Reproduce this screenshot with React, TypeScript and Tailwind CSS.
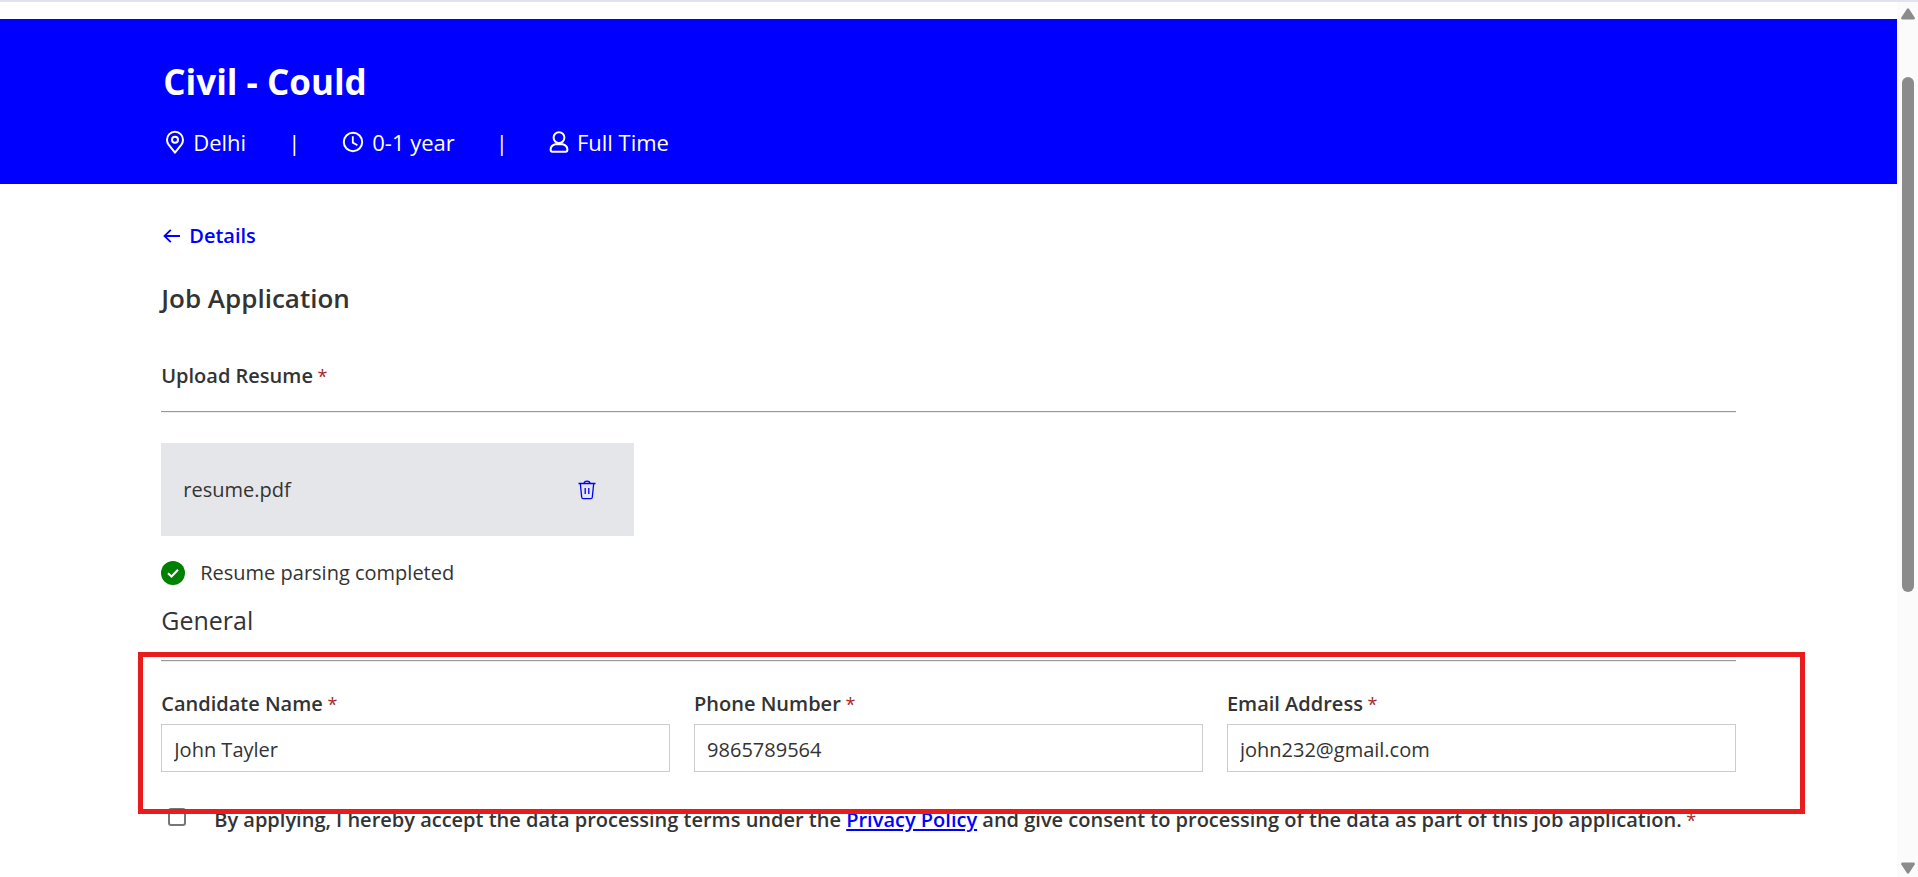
import React from "react";

function PinIcon() {
  return (
    <svg width="20" height="24" viewBox="0 0 20 24" fill="none" stroke="currentColor" strokeWidth="2" aria-hidden="true">
      <path d="M10 22.6 3.6 14.6A8 8 0 0 1 2 9.8 8 8 0 0 1 18 9.8a8 8 0 0 1-1.6 4.8Z" strokeLinejoin="round" />
      <circle cx="10" cy="9.8" r="3" />
    </svg>
  );
}

function ClockIcon() {
  return (
    <svg width="22" height="22" viewBox="0 0 22 22" fill="none" stroke="currentColor" strokeWidth="2" aria-hidden="true">
      <circle cx="11" cy="11" r="9.2" />
      <path d="M10.8 5.2v6.4l4.6 2.6" strokeWidth="1.8" />
    </svg>
  );
}

function PersonIcon() {
  return (
    <svg width="20" height="22" viewBox="0 0 20 22" fill="none" stroke="currentColor" strokeWidth="2" aria-hidden="true">
      <circle cx="10" cy="6.6" r="5.4" />
      <path d="M6.200 13.200h7.600c2.800.8 4.600 2.600 4.600 5.400 0 1.400-.6 2.200-1.800 2.200H3.400c-1.200 0-1.800-.8-1.800-2.200 0-2.800 1.800-4.600 4.600-5.400Z" />
    </svg>
  );
}

function BackIcon() {
  return (
    <svg width="18" height="14" viewBox="0 0 18 14" fill="none" stroke="currentColor" strokeWidth="1.800" aria-hidden="true">
      <path d="M17 7H2M7.800.8 1.500 7l6.300 6.200" />
    </svg>
  );
}

function TrashIcon() {
  return (
    <svg width="18" height="20" viewBox="0 0 18 20" fill="none" stroke="currentColor" strokeWidth="1.300" aria-hidden="true">
      <path d="M.5 3.500h17M6 3.500C6 1.800 7.200 1.200 9 1.200s3 .6 3 2.300M2.300 3.500l1.400 13.700c.1 1 .7 1.500 1.700 1.500h7.200c1 0 1.600-.5 1.700-1.500l1.400-13.700M7.200 8v6M10.800 8v6" />
    </svg>
  );
}

function DoneIcon() {
  return (
    <svg width="24" height="24" viewBox="0 0 24 24" aria-hidden="true">
      <circle cx="12" cy="12" r="12" fill="#008000" />
      <path d="m7 12.200 3.500 3.300L17 8.700" fill="none" stroke="#fff" strokeWidth="2" />
    </svg>
  );
}

function Required() {
  return <span className="text-[18px] font-normal text-[#a4262c]"> *</span>;
}

function Rule() {
  return <hr className="h-[2px] border-0 border-t border-[#999] bg-[#eee]" />;
}

type FieldProps = { id: string; label: string; type: string; value: string };

function Field({ id, label, type, value }: FieldProps) {
  return (
    <div className="flex min-w-0 flex-col">
      <label htmlFor={id} className="pb-[6px] font-semibold">
        {label}
        <Required />
      </label>
      <input
        id={id}
        type={type}
        defaultValue={value}
        className="h-12 w-full border border-[#ccc] bg-white px-3 pt-[2px] outline-none focus:border-[#0000ff]"
      />
    </div>
  );
}

function ScrollRail() {
  return (
    <div className="flex w-[21px] shrink-0 flex-col items-center bg-[#fbfbfb] pt-[6px] pb-[3px]" aria-hidden="true">
      <svg width="14" height="12" viewBox="0 0 14 12" fill="#8b8b8b">
        <path d="M5.700 1.200Q7-.6 8.300 1.200L13.700 9.500Q14.200 11.500 12.500 11.500H1.500Q-.2 11.500.3 9.500Z" />
      </svg>
      <div className="flex w-3 flex-1 flex-col pt-[57px] pb-4">
        <div className="basis-[515px] rounded-full bg-[#8b8b8b]" />
      </div>
      <svg width="14" height="12" viewBox="0 0 14 12" fill="#8b8b8b">
        <path d="M5.700 10.800Q7 12.600 8.300 10.800L13.700 2.500Q14.200.5 12.500.5H1.500Q-.2.5.3 2.500Z" />
      </svg>
    </div>
  );
}

export default function App() {
  return (
    <div className="flex min-h-screen flex-col border-t-2 border-[#e0e3ed] bg-white font-['Open_Sans','Noto_Sans',sans-serif] text-[20px] leading-7 text-[#333]">
      <div className="flex flex-1">
        <div className="min-w-0 flex-1 pt-[17px]">
          <header className="bg-[#0000ff] px-[8.5%] pt-[39px] pb-[26px] text-white">
            <h1 className="pl-[2px] text-[35px] leading-12 font-bold">Civil - Could</h1>
            <ul className="flex items-center pt-5 pl-1 text-[22px] leading-8">
              <li className="flex items-center gap-2">
                <PinIcon />
                Delhi
              </li>
              <li className="px-[42px]">|</li>
              <li className="flex items-center gap-2">
                <ClockIcon />
                0-1 year
              </li>
              <li className="px-[41px]">|</li>
              <li className="flex items-center gap-2">
                <PersonIcon />
                Full Time
              </li>
            </ul>
          </header>

          <main className="px-[8.5%] pt-[38px]">
            <a href="#details" className="inline-flex items-center gap-2 pl-[2px] font-semibold text-[#0000ff]">
              <BackIcon />
              Details
            </a>
            <h2 className="pt-[30px] text-[26px] leading-9 font-semibold">Job Application</h2>

            <h3 className="pt-[46px] pb-[21px] font-semibold">
              Upload Resume
              <Required />
            </h3>
            <Rule />
            <div className="mt-[30px] flex h-[93px] w-[30%] min-w-72 items-center justify-between bg-[#e4e6ea] pr-[38px] pl-[22px]">
              <span>resume.pdf</span>
              <button type="button" aria-label="Delete resume" className="text-[#0000ff]">
                <TrashIcon />
              </button>
            </div>
            <p className="flex items-center gap-[15px] pt-[23px]">
              <DoneIcon />
              Resume parsing completed
            </p>
            <h3 className="pt-[15px] pb-[22px] text-[25px] leading-9">General</h3>

            <form className="relative">
              <Rule />
              <div className="grid grid-cols-3 gap-6 pt-7">
                <Field id="name" label="Candidate Name" type="text" value="John Tayler" />
                <Field id="phone" label="Phone Number" type="tel" value="9865789564" />
                <Field id="email" label="Email Address" type="email" value="john232@gmail.com" />
              </div>
              <div className="flex items-start gap-7 pt-[34px] pl-[7px]">
                <input
                  id="consent"
                  type="checkbox"
                  className="mt-[2px] size-[18px] shrink-0 appearance-none rounded-[3px] border-2 border-[#767676] bg-white checked:bg-[#0000ff]"
                />
                <label htmlFor="consent" className="font-semibold">
                  By applying, I hereby accept the data processing terms under the{" "}
                  <a href="#privacy" className="text-[#0000ff] underline decoration-2 underline-offset-2">
                    Privacy Policy
                  </a>{" "}
                  and give consent to processing of the data as part of this job application.
                  <Required />
                </label>
              </div>
              <div className="pointer-events-none absolute -top-2 -right-[69px] -left-[23px] h-[162px] border-5 border-[#e81c1c]" />
            </form>
          </main>
        </div>
        <ScrollRail />
      </div>
    </div>
  );
}
